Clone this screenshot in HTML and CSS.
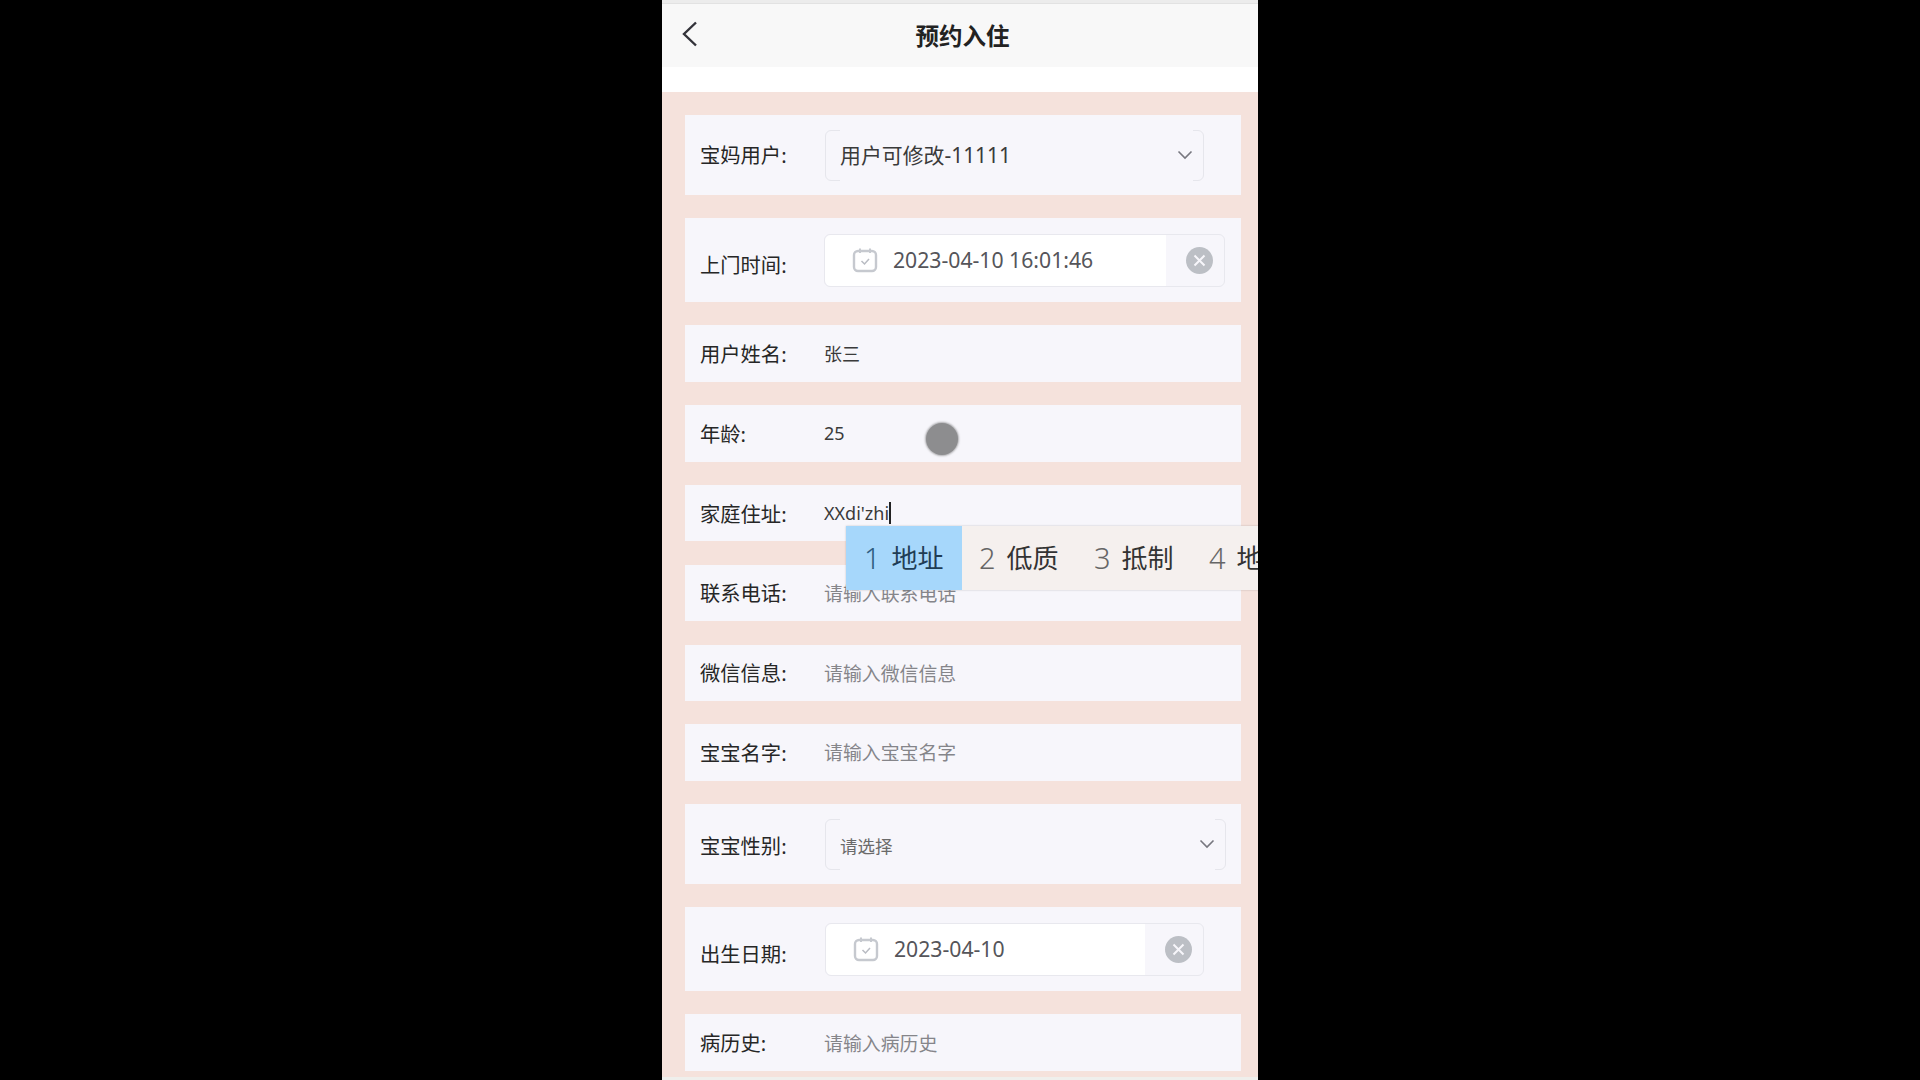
FILE: index.html
```html
<!DOCTYPE html>
<html lang="zh-CN">
<head>
    <meta charset="UTF-8">
    <title>预约入住</title>
    <link rel="stylesheet" href="styles.css">
</head>
<body>
    <div class="phone">
        <div class="status-strip"></div>
        <header class="page-header">
            <svg class="back-icon" viewBox="0 0 16 26" width="16" height="26">
                <path d="M14 1.5 L2 13 L14 24.5" fill="none" stroke="#33333a" stroke-width="2.4"/>
            </svg>
            <h1>预约入住</h1>
        </header>
        <div class="header-gap"></div>

        <form class="booking-form">
            <div class="row row-select">
                <span class="label label-raised">宝妈用户:</span>
                <div class="select field-narrow">
                    <div class="select-value">
                        <span class="select-text">用户可修改-11111</span>
                        <svg class="chevron" viewBox="0 0 16 10" width="16" height="10">
                            <path d="M1.5 1.5 L8 8 L14.5 1.5" fill="none" stroke="#77777f" stroke-width="1.6"/>
                        </svg>
                    </div>
                </div>
            </div>

            <div class="row row-date">
                <span class="label">上门时间:</span>
                <div class="date-field field-wide">
                    <div class="date-main">
                        <svg class="calendar" viewBox="0 0 26 26" width="26" height="26">
                            <rect x="2" y="4" width="22" height="20" rx="4" fill="none" stroke="#c6c9cf" stroke-width="2.4"/>
                            <path d="M8 1.5 V6 M18 1.5 V6" stroke="#c6c9cf" stroke-width="2"/>
                            <path d="M9.5 14 L12.5 17 L17 12" fill="none" stroke="#b9bcc3" stroke-width="1.5"/>
                        </svg>
                        <span class="date-text">2023-04-10 16:01:46</span>
                    </div>
                    <div class="date-clear">
                        <svg viewBox="0 0 27 27" width="27" height="27">
                            <circle cx="13.5" cy="13.5" r="13.5" fill="#bcbfc5"/>
                            <path d="M8.5 8.5 L18.5 18.5 M18.5 8.5 L8.5 18.5" stroke="#f7f6fb" stroke-width="2"/>
                        </svg>
                    </div>
                </div>
            </div>

            <div class="row">
                <span class="label">用户姓名:</span>
                <span class="value">张三</span>
            </div>
            <div class="row">
                <span class="label">年龄:</span>
                <span class="value">25</span>
            </div>
            <div class="row">
                <span class="label">家庭住址:</span>
                <span class="value typing">XXdi'zhi</span>
            </div>
            <div class="row">
                <span class="label">联系电话:</span>
                <span class="value placeholder">请输入联系电话</span>
            </div>
            <div class="row">
                <span class="label">微信信息:</span>
                <span class="value placeholder">请输入微信信息</span>
            </div>
            <div class="row">
                <span class="label">宝宝名字:</span>
                <span class="value placeholder">请输入宝宝名字</span>
            </div>

            <div class="row row-select">
                <span class="label label-lowered">宝宝性别:</span>
                <div class="select field-wide">
                    <div class="select-value">
                        <span class="select-text select-empty">请选择</span>
                        <svg class="chevron" viewBox="0 0 16 10" width="16" height="10">
                            <path d="M1.5 1.5 L8 8 L14.5 1.5" fill="none" stroke="#77777f" stroke-width="1.6"/>
                        </svg>
                    </div>
                </div>
            </div>

            <div class="row row-date">
                <span class="label">出生日期:</span>
                <div class="date-field field-narrow">
                    <div class="date-main">
                        <svg class="calendar" viewBox="0 0 26 26" width="26" height="26">
                            <rect x="2" y="4" width="22" height="20" rx="4" fill="none" stroke="#c6c9cf" stroke-width="2.4"/>
                            <path d="M8 1.5 V6 M18 1.5 V6" stroke="#c6c9cf" stroke-width="2"/>
                            <path d="M9.5 14 L12.5 17 L17 12" fill="none" stroke="#b9bcc3" stroke-width="1.5"/>
                        </svg>
                        <span class="date-text">2023-04-10</span>
                    </div>
                    <div class="date-clear">
                        <svg viewBox="0 0 27 27" width="27" height="27">
                            <circle cx="13.5" cy="13.5" r="13.5" fill="#bcbfc5"/>
                            <path d="M8.5 8.5 L18.5 18.5 M18.5 8.5 L8.5 18.5" stroke="#f7f6fb" stroke-width="2"/>
                        </svg>
                    </div>
                </div>
            </div>

            <div class="row">
                <span class="label">病历史:</span>
                <span class="value placeholder">请输入病历史</span>
            </div>
        </form>
        <div class="bottom-strip"></div>

        <!-- Input method candidates, sits over the form -->
        <div class="ime-popup">
            <div class="ime-item active"><span class="ime-num">1</span><span>地址</span></div>
            <div class="ime-item"><span class="ime-num">2</span><span>低质</span></div>
            <div class="ime-item"><span class="ime-num">3</span><span>抵制</span></div>
            <div class="ime-item"><span class="ime-num">4</span><span>地址</span></div>
        </div>

        <!-- Touch pointer -->
        <div class="touch-dot"></div>
    </div>
</body>
</html>
```

FILE: styles.css
```css
body {
    margin: 0;
    height: 100vh;
    background: #000;
    display: flex;
    justify-content: center;
    overflow: hidden;
    font-family: "Noto Sans", "Noto Sans CJK SC", sans-serif;
    color: #333;
}

.phone {
    position: relative;
    width: 596px;
    height: 1080px;
    background: #fff;
    display: flex;
    flex-direction: column;
    overflow: hidden;
}

.status-strip {
    height: 3px;
    background: #ececec;
    border-bottom: 1px solid #e2e2e2;
}

/* Header */
.page-header {
    box-sizing: border-box;
    height: 63px;
    flex-shrink: 0;
    padding: 0 0 2px 5px;
    background: #f8f8f8;
    display: flex;
    align-items: center;
    justify-content: center;
    position: relative;
}

.page-header h1 {
    margin: 0;
    font-size: 23.5px;
    font-weight: 700;
    color: #222;
}

.back-icon {
    position: absolute;
    left: 20px;
    top: 17px;
}

.header-gap {
    height: 25px;
    flex-shrink: 0;
}

/* Form */
.booking-form {
    flex: 1;
    background: #f5e2dc;
    padding: 23px 17px 0 23px;
    display: flex;
    flex-direction: column;
    gap: 23.4px;
}

.bottom-strip {
    height: 3px;
    background: #efefec;
}

.row {
    height: 56.4px;
    flex-shrink: 0;
    background: #f7f6fb;
    padding-left: 15px;
    display: flex;
    align-items: center;
}

.row-select {
    height: 80px;
}

.row-date {
    height: 83.6px;
}

.label {
    width: 124px;
    flex-shrink: 0;
    margin-bottom: 1px;
    font-size: 20.3px;
    color: #262626;
}

.label-raised {
    margin-bottom: 2px;
}

.label-lowered {
    margin: 2px 0 0;
}

.row-date .label {
    margin-bottom: 0;
    padding-top: 7px;
}

.value {
    margin-bottom: 1px;
    font-size: 18px;
    color: #3a3a3a;
}

.placeholder {
    margin-bottom: 0;
    font-size: 18.9px;
    color: #85858a;
}

.typing {
    margin-bottom: 0;
    border-right: 2px solid #222;
    line-height: 22px;
}

.field-narrow {
    width: 379px;
}

.field-wide {
    width: 401px;
}

/* Select: the border only shows at the two ends */
.select {
    box-sizing: border-box;
    height: 51px;
    margin-left: 1px;
    padding: 0 10px 0 14px;
    border: 1px solid #e6e6ec;
    border-radius: 6px;
    display: flex;
}

.select-value {
    flex: 1;
    margin: -1px 0;
    background: #f7f6fb;
    display: flex;
    align-items: center;
    justify-content: space-between;
}

.select-text {
    margin-bottom: 2px;
    font-size: 20.9px;
    color: #3a3a3a;
}

.select-empty {
    margin: 2px 0 0;
    font-size: 17.5px;
    color: #6a6a6a;
}

/* Date field */
.date-field {
    box-sizing: border-box;
    height: 53px;
    border: 1px solid #e8e8ee;
    border-radius: 6px;
    display: flex;
}

.date-field.field-narrow {
    margin-left: 1px;
}

.date-main {
    flex: 1;
    background: #fff;
    border-radius: 6px 0 0 6px;
    padding-left: 27px;
    display: flex;
    align-items: center;
    gap: 15px;
}

.date-text {
    margin-bottom: 2px;
    font-size: 21.2px;
    color: #55555a;
}

.date-clear {
    box-sizing: border-box;
    width: 58px;
    padding-right: 11px;
    display: flex;
    align-items: center;
    justify-content: flex-end;
}

/* Candidate bar */
.ime-popup {
    position: absolute;
    left: 184px;
    top: 526px;
    height: 64px;
    display: flex;
    background: #f5f0ee;
    box-shadow: 0 0 2px rgba(0, 0, 0, 0.2);
}

.ime-item {
    box-sizing: border-box;
    width: 115px;
    flex-shrink: 0;
    padding: 0 0 2px 17px;
    display: flex;
    align-items: center;
    gap: 11px;
    font-size: 26px;
    color: #333;
}

.ime-item.active {
    width: 116px;
    padding-left: 18px;
    background: #a6d7fb;
    color: #1f3d55;
}

.ime-num {
    font-size: 29px;
    font-weight: 300;
    color: #666;
}

.active .ime-num {
    color: #2f5d80;
}

.touch-dot {
    position: absolute;
    left: 264px;
    top: 423px;
    width: 32px;
    height: 32px;
    border-radius: 50%;
    background: #8d8d8f;
    box-shadow: 0 0 2px 1px rgba(141, 141, 143, 0.7);
}
```
